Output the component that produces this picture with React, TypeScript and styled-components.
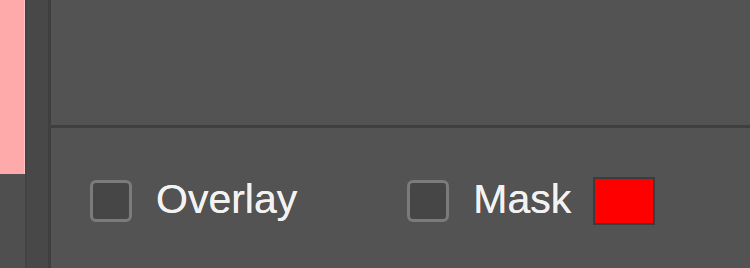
import React from "react";
import styled, { createGlobalStyle } from "styled-components";

const Global = createGlobalStyle`
  html, body { margin: 0; padding: 0; background: #535353; }
  body { font-family: "Liberation Sans", Arial, sans-serif; }
`;

const Page = styled.div`
  display: flex;
  width: 750px;
  height: 268px;
  overflow: hidden;
  background: #535353;
`;

const LeftColumn = styled.div`
  width: 25px;
  display: flex;
  flex-direction: column;
  background: #4f4f4f;
`;

const PinkSwatch = styled.div`
  height: 174px;
  background: #ffaaaa;
  border-right: 1px solid #ffc4c4;
  box-sizing: border-box;
`;

const Gutter = styled.div`
  width: 21px;
  background: #484848;
  border-left: 2px solid #444444;
  border-right: 3px solid #3f3f3f;
  box-sizing: content-box;
`;

const Main = styled.div`
  flex: 1;
  display: flex;
  flex-direction: column;
`;

const TopSection = styled.div`
  height: 125px;
  border-bottom: 3px solid #3f3f3f;
`;

const OptionsRow = styled.div`
  display: flex;
  align-items: center;
  padding: 49px 0 0 39px;
`;

const Option = styled.label<{ $gapAfter?: number }>`
  display: flex;
  align-items: center;
  gap: 24px;
  margin-right: ${(p) => p.$gapAfter ?? 0}px;
`;

const CheckBox = styled.span`
  width: 42px;
  height: 42px;
  box-sizing: border-box;
  border: 3px solid #7b7b7b;
  border-radius: 6px;
  background: #464646;
`;

const Label = styled.span`
  font-size: 41px;
  line-height: 41px;
  color: #f2f2f2;
  margin-top: -3px;
  text-shadow: 0 0 0.4px #f2f2f2;
`;

const ColorSwatch = styled.span`
  width: 62px;
  height: 48px;
  box-sizing: border-box;
  border: 2px solid #3c3c3c;
  background: #ff0000;
  margin-left: 22px;
`;

export default function App() {
  return (
    <>
      <Global />
      <Page>
        <LeftColumn>
          <PinkSwatch />
        </LeftColumn>
        <Gutter />
        <Main>
          <TopSection />
          <OptionsRow>
            <Option $gapAfter={110}>
              <CheckBox />
              <Label>Overlay</Label>
            </Option>
            <Option>
              <CheckBox />
              <Label>Mask</Label>
            </Option>
            <ColorSwatch />
          </OptionsRow>
        </Main>
      </Page>
    </>
  );
}
